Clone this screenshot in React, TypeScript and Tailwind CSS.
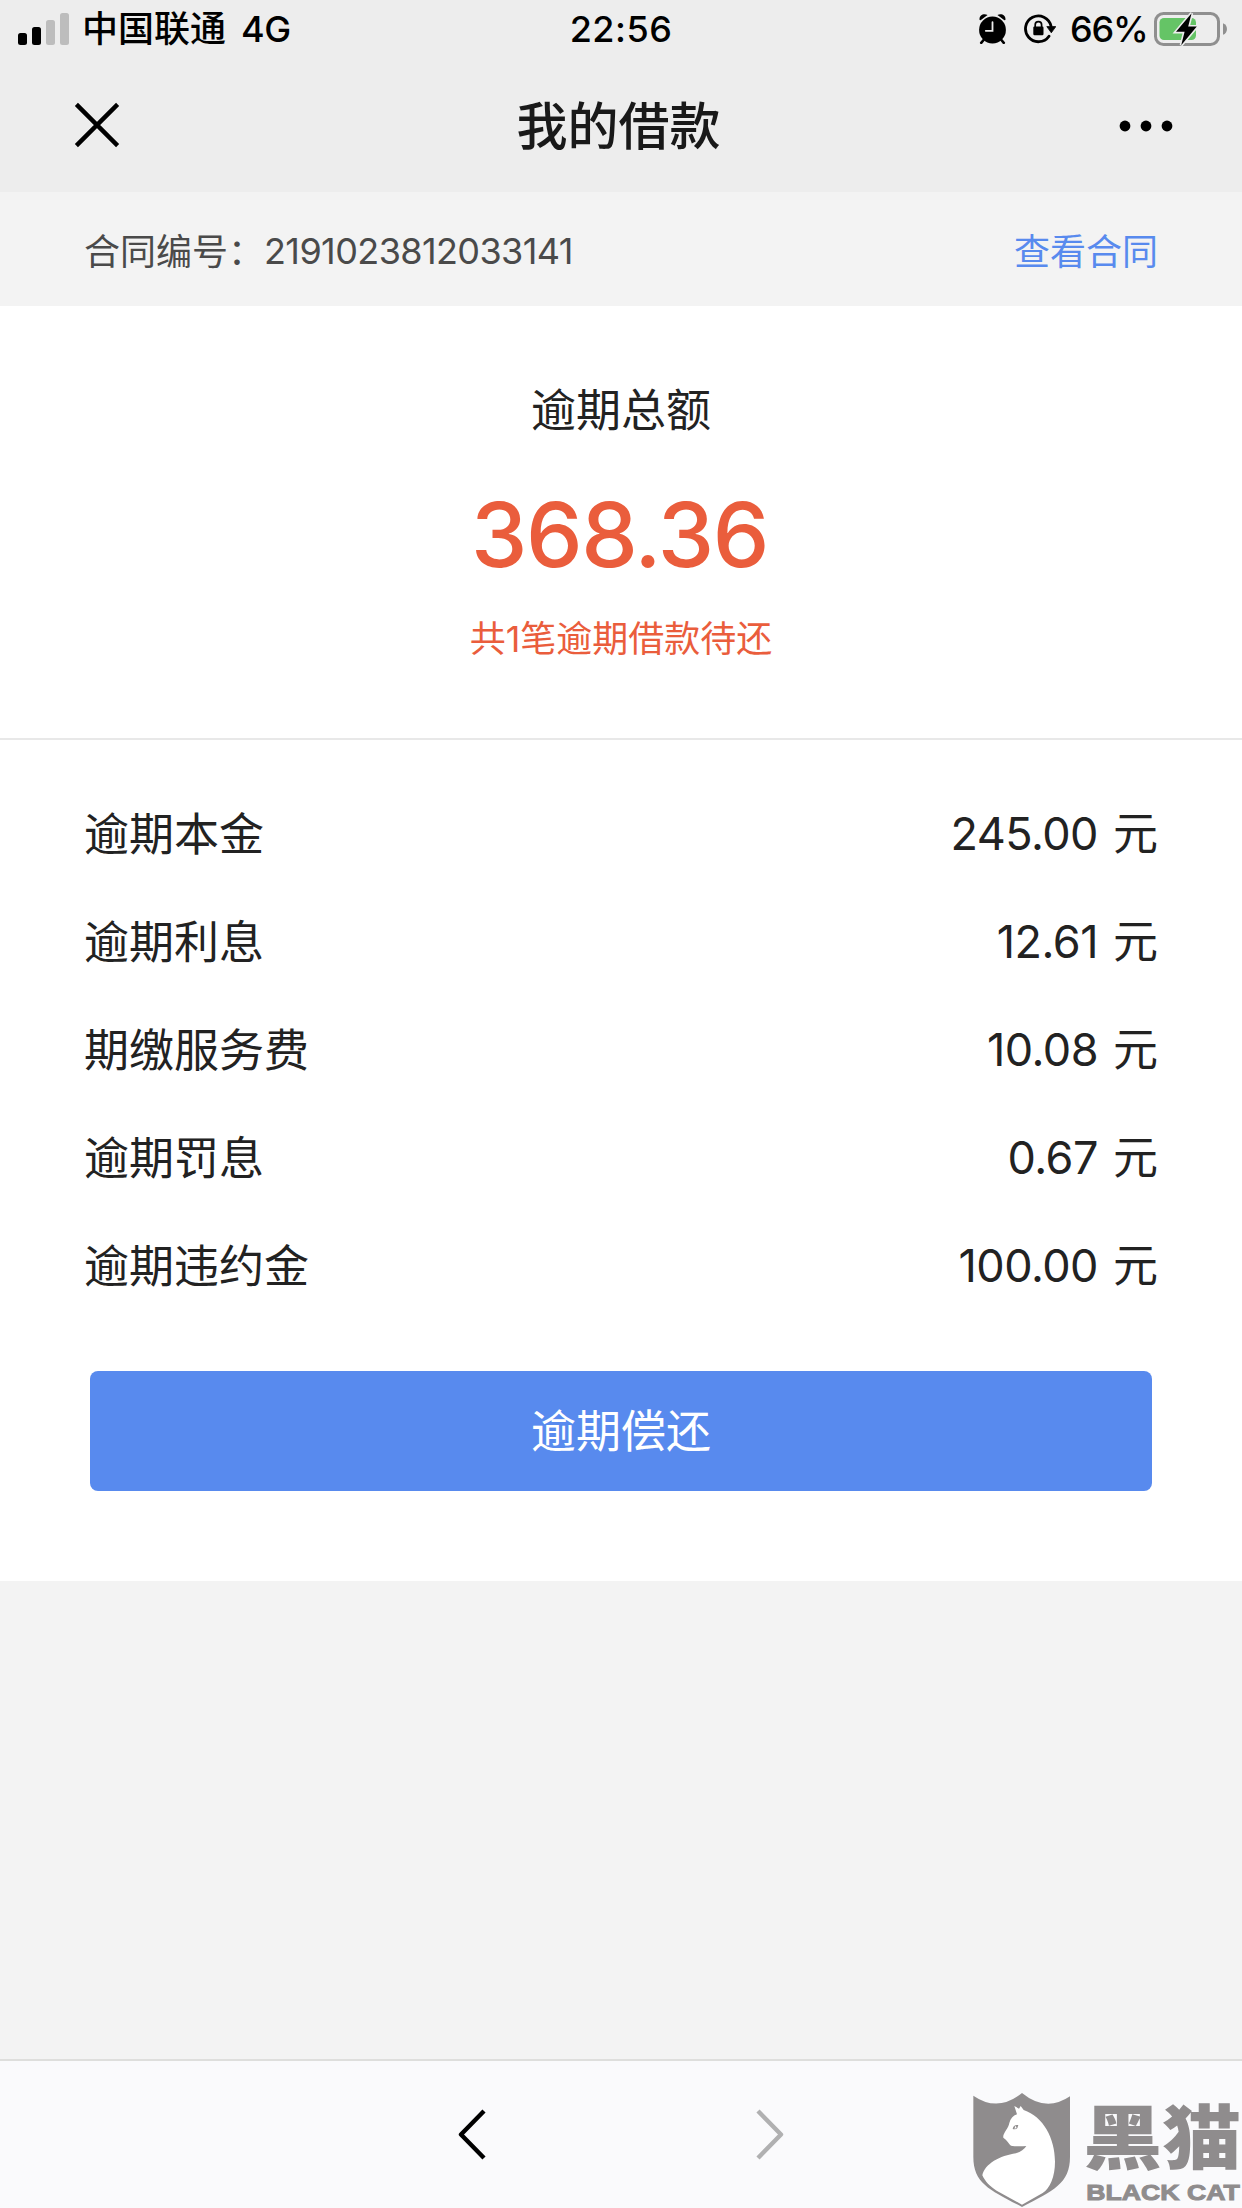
/**
 * Overdue loan detail page, shown inside the in-app browser.
 */

type FeeItem = {
  label: string;
  amount: string;
};

const contractNo = "2191023812033141";

const feeItems: FeeItem[] = [
  { label: "逾期本金", amount: "245.00" },
  { label: "逾期利息", amount: "12.61" },
  { label: "期缴服务费", amount: "10.08" },
  { label: "逾期罚息", amount: "0.67" },
  { label: "逾期违约金", amount: "100.00" },
];

const SignalIcon = () => (
  <svg width="51" height="32" viewBox="0 0 51 32">
    <rect x="0" y="20" width="9" height="12" rx="2.5" fill="#000" />
    <rect x="14" y="14" width="9" height="18" rx="2.5" fill="#000" />
    <rect x="28" y="7" width="9" height="25" rx="2.5" fill="#bdbdbd" />
    <rect x="42" y="0" width="9" height="32" rx="2.5" fill="#bdbdbd" />
  </svg>
);

const AlarmIcon = () => (
  <svg width="28" height="30" viewBox="0 0 28 30">
    <circle cx="13.5" cy="16" r="13.4" fill="#000" />
    <path
      d="M0.6 6C-0.2 1.2 4.4 -1 8.6 0.9L1.6 6.2ZM26.4 6C27.2 1.2 22.6 -1 18.4 0.9L25.4 6.2Z"
      fill="#000"
      stroke="#ededed"
      strokeWidth="1.6"
      paintOrder="stroke"
    />
    <path d="M4.6 26l-2.4 2.8M22.4 26l2.4 2.8" stroke="#000" strokeWidth="2.6" strokeLinecap="round" />
    <path d="M13.5 8.2v8.6H6.8" stroke="#ededed" strokeWidth="1.8" fill="none" strokeLinecap="round" />
  </svg>
);

const RotationLockIcon = () => (
  <svg width="32" height="30" viewBox="0 0 32 30">
    <path d="M25 22.2A12.9 12.9 0 1 1 27 12" stroke="#000" strokeWidth="2.8" fill="none" strokeLinecap="round" />
    <path d="M22.8 12.6h9l-4.5 6.2z" fill="#000" stroke="#000" strokeWidth="0.8" strokeLinejoin="round" />
    <rect x="9.3" y="12.6" width="10.2" height="8.6" rx="1.2" fill="#000" />
    <path d="M11.2 13v-2.2a3.2 3.2 0 0 1 6.4 0V13" stroke="#000" strokeWidth="1.7" fill="none" />
  </svg>
);

const BatteryIcon = () => (
  <svg width="74" height="36" viewBox="0 0 74 36">
    <rect x="1.5" y="2.5" width="63" height="31" rx="8" fill="none" stroke="#8f8f8f" strokeWidth="3" />
    <path d="M69 12.2C74.3 13.8 74.3 22.2 69 23.8z" fill="#8f8f8f" />
    <rect x="5.5" y="7" width="36.5" height="22" rx="4.5" fill="#65c466" />
    <path
      d="M37.6 2.2L22 20.8H30.6L27.2 34.2L42.8 15.6H34.2Z"
      fill="#000"
      stroke="#ededed"
      strokeWidth="3.2"
      paintOrder="stroke"
    />
  </svg>
);

const StatusBar = () => (
  <div className="grid h-[58px] grid-cols-3 items-center font-['Inter','Noto_Sans_CJK_SC',sans-serif] text-[36px] leading-none font-medium text-black">
    <div className="flex items-center pl-[18px]">
      <SignalIcon />
      <span className="ml-[13px] whitespace-nowrap">中国联通</span>
      <span className="ml-[15px] tracking-[-0.5px]">4G</span>
    </div>
    <div className="text-center tracking-[0.5px]">22:56</div>
    <div className="flex items-center justify-end pr-[14px]">
      <AlarmIcon />
      <span className="ml-[17px]">
        <RotationLockIcon />
      </span>
      <span className="ml-[14px] w-[84px] tracking-[-1.2px]">66%</span>
      <BatteryIcon />
    </div>
  </div>
);

const NavBar = () => (
  <div className="flex h-[134px] items-center justify-between pr-[69px] pl-[74px]">
    <svg width="46" height="46" viewBox="0 0 46 46">
      <path d="M2.4 2.4L43.6 43.6M43.6 2.4L2.4 43.6" stroke="#000" strokeWidth="4.4" />
    </svg>
    <h1 className="mr-[2px] pt-[2px] text-[51px] leading-none font-medium text-[#191919]">
      我的借款
    </h1>
    <svg className="mt-[2px]" width="54" height="12" viewBox="0 0 54 12">
      <circle cx="6" cy="6" r="5.4" />
      <circle cx="27" cy="6" r="5.4" />
      <circle cx="48" cy="6" r="5.4" />
    </svg>
  </div>
);

const Watermark = () => (
  <svg
    className="absolute right-0 bottom-0 overflow-visible"
    width="272"
    height="118"
    viewBox="90 90 816 354"
  >
    <path
      d="M100 107Q174 158 246 99Q318 158 390 109V290C390 372 340 390 246 441C152 390 100 372 100 290Z"
      fill="#8f8c8d"
    />
    <path
      d="M223 138L237 146L242 138L251 150C310 170 345 235 345 305C345 350 330 385 308 399L246 434L170 392C150 380 135 364 127 346C134 312 180 287 228 280Q250 273 259 258Q234 260 213 257C207 252 201 240 190 233C187 221 206 205 208 189C211 176 219 167 231 163Z"
      fill="#fff"
    />
    <path d="M218 207Q220 193 235 195Q233 211 218 207Z" fill="#8f8c8d" />
    <path d="M225 197L230 202L224 208Z" fill="#fff" />
    <g fill="#8f8c8d">
      <text
        x="430"
        y="312"
        fontSize="212"
        fontWeight="900"
        textLength="474"
        lengthAdjust="spacingAndGlyphs"
        className="font-['Noto_Sans_CJK_SC',sans-serif]"
      >
        黑猫
      </text>
      <text
        x="439"
        y="420"
        fontSize="68"
        fontWeight="700"
        textLength="460"
        lengthAdjust="spacingAndGlyphs"
        stroke="#8f8c8d"
        strokeWidth="3"
        className="font-['Liberation_Sans',sans-serif]"
      >
        BLACK CAT
      </text>
    </g>
  </svg>
);

export default function App() {
  return (
    <div className="relative flex h-[2208px] w-[1242px] flex-col overflow-hidden bg-[#f3f3f3] font-['Inter','Noto_Sans_CJK_SC',sans-serif] text-[#222]">
      <header className="bg-[#ededed]">
        <StatusBar />
        <NavBar />
      </header>

      <div className="flex h-[114px] items-center justify-between px-[84px] pt-[4px] text-[36px] leading-none">
        <div className="flex items-center text-[#4a4a4a]">
          <span className="w-[180px] pb-[4px] font-['Noto_Sans_CJK_SC',sans-serif]">合同编号：</span>
          <span className="tracking-[-0.6px]">{contractNo}</span>
        </div>
        <a className="pt-[2px] text-[#588aee]">查看合同</a>
      </div>

      <main className="h-[1275px] bg-white">
        <section className="flex h-[434px] flex-col items-center border-b-2 border-[#e8e8e8] pt-[77px] leading-none">
          <h2 className="text-[45px] leading-[56px]">逾期总额</h2>
          <p className="mt-[42px] pr-[3px] text-[90px] leading-[108px] font-medium tracking-[-1.5px] text-[#ea5d3c]">
            368.36
          </p>
          <p className="mt-[26px] text-[36px] leading-[48px] text-[#ea5d3c]">
            共1笔逾期借款待还
          </p>
        </section>

        <ul className="px-[84px] pt-[40px] text-[45px] leading-none">
          {feeItems.map((item) => (
            <li key={item.label} className="flex h-[108px] items-center justify-between">
              <span>{item.label}</span>
              <span className="flex pb-[2px]">
                <span className="mr-[15px] tracking-[-0.5px]">{item.amount}</span>元
              </span>
            </li>
          ))}
        </ul>

        <button className="mx-[90px] mt-[51px] flex h-[120px] w-[1062px] items-center justify-center rounded-[8px] bg-[#588aee] text-[45px] leading-none text-white">
          逾期偿还
        </button>
      </main>

      <footer className="mt-auto flex h-[149px] items-start justify-center border-t-2 border-[#dededc] bg-[#fafafc] pt-[47px]">
        <svg width="30" height="54" viewBox="0 0 30 54" fill="none" stroke="#000" strokeWidth="4.4">
          <path d="M26 3L3 26.5L26 50" strokeLinejoin="round" />
        </svg>
        <svg className="ml-[266px]" width="30" height="54" viewBox="0 0 30 54" fill="none" stroke="#b0b0b1" strokeWidth="4.4">
          <path d="M4 3L27 26.5L4 50" strokeLinejoin="round" />
        </svg>
      </footer>

      <Watermark />
    </div>
  );
}
